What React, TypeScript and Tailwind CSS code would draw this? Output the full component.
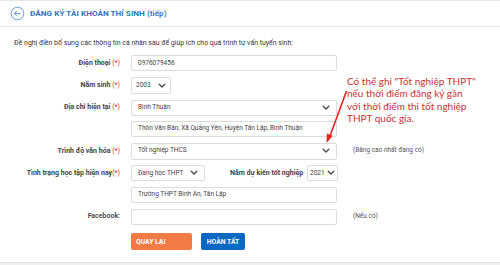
import React from "react";

const Chevron = ({ className = "" }: { className?: string }) => (
  <svg width="8" height="6" viewBox="0 0 8 6" className={className}>
    <path d="M1.2 1.3 L4 4 L6.8 1.3" fill="none" stroke="#444" strokeWidth="1.3" strokeLinecap="round" strokeLinejoin="round" />
  </svg>
);

const Req = () => <span className="text-[#c0392b] font-normal">(*)</span>;

const Label = ({ children }: { children: React.ReactNode }) => (
  <div className="w-[121px] shrink-0 pr-[1px] text-right text-[7px] font-bold text-[#444]">{children}</div>
);

const Box = ({ children, className = "" }: { children?: React.ReactNode; className?: string }) => (
  <div className={`h-[16px] border border-[#dcdcdc] rounded-[2px] bg-white flex items-center px-[6px] text-[6.5px] text-[#444] ${className}`}>
    {children}
  </div>
);

export default function App() {
  return (
    <div className="relative w-[500px] h-[265px] bg-white overflow-hidden" style={{ fontFamily: "Roboto, 'Liberation Sans', Arial, sans-serif" }}>
      {/* header */}
      <div className="h-[27px] border-t border-b border-[#e6e6e6] flex items-center pl-[10px]">
        <svg width="15" height="15" viewBox="0 0 15 15">
          <circle cx="7.5" cy="7.5" r="6.3" fill="none" stroke="#6aa3dc" strokeWidth="1" />
          <path d="M4.5 7.5 H10.2 M6.6 5.4 L4.5 7.5 L6.6 9.6" fill="none" stroke="#6aa3dc" strokeWidth="1" strokeLinecap="round" strokeLinejoin="round" />
        </svg>
        <div className="ml-[5px] text-[8.1px] font-bold text-[#2f73bd] tracking-[0.05px]">
          ĐĂNG KÝ TÀI KHOẢN THÍ SINH <span className="font-semibold">(tiếp)</span>
        </div>
      </div>

      <div className="pl-[14px] pt-[11px] text-[6.95px] text-[#333]">
        Đề nghị điền bổ sung các thông tin cá nhân sau để giúp ích cho quá trình tư vấn tuyển sinh:
      </div>

      <div className="mt-[7px] flex flex-col gap-[5.6px]">
        <div className="flex items-center h-[16px]">
          <Label>Điện thoại <Req /></Label>
          <Box className="ml-[10px] w-[206px]">0976079456</Box>
        </div>
        <div className="flex items-center h-[17px]">
          <Label>Năm sinh <Req /></Label>
          <Box className="ml-[10px] w-[40px] h-[17px] justify-between !px-[4px]">
            <span>2003</span>
            <Chevron />
          </Box>
        </div>
        <div className="flex items-center h-[16px]">
          <Label>Địa chỉ hiện tại <Req /></Label>
          <Box className="ml-[10px] w-[206px] justify-between">
            <span>Bình Thuận</span>
            <Chevron />
          </Box>
        </div>
        <div className="flex items-center h-[16px]">
          <div className="w-[121px] shrink-0" />
          <Box className="ml-[10px] w-[206px]">Thôn Văn Bân, Xã Quảng Yên, Huyện Tân Lập, Bình Thuận</Box>
        </div>
        <div className="flex items-center h-[17px]">
          <Label>Trình độ văn hóa <Req /></Label>
          <Box className="ml-[10px] w-[206px] h-[17px] justify-between">
            <span>Tốt nghiệp THCS</span>
            <Chevron />
          </Box>
          <div className="ml-[16px] text-[6.5px] text-[#555]">(Bằng cao nhất đang có)</div>
        </div>
        <div className="flex items-center h-[16px]">
          <Label>Tình trạng học tập hiện nay<Req /></Label>
          <Box className="ml-[10px] w-[74px] justify-between">
            <span>Đang học THPT</span>
            <Chevron />
          </Box>
          <div className="ml-[25px] w-[77px] text-[7px] font-bold text-[#444]">Năm dự kiến tốt nghiệp</div>
          <Box className="w-[31px] justify-between !px-[2px]">
            <span>2021</span>
            <Chevron />
          </Box>
        </div>
        <div className="flex items-center h-[16px]">
          <div className="w-[121px] shrink-0" />
          <Box className="ml-[10px] w-[206px]">Trường THPT Bình An, Tân Lập</Box>
        </div>
        <div className="flex items-center h-[16px]">
          <Label><span className="font-semibold">Facebook:</span></Label>
          <Box className="ml-[10px] w-[206px]" />
          <div className="ml-[16px] text-[6.5px] text-[#555]">(Nếu có)</div>
        </div>
        <div className="flex items-center h-[17px] mt-[3px]">
          <div className="w-[121px] shrink-0" />
          <button className="ml-[10px] w-[61px] h-[17px] rounded-[2px] bg-[#f27a44] text-white text-[6.8px] font-bold text-left pl-[5px]">QUAY LẠI</button>
          <button className="ml-[9px] w-[44px] h-[17px] rounded-[2px] bg-[#0a68c2] text-white text-[6.8px] font-bold">HOÀN TẤT</button>
        </div>
      </div>

      <div className="absolute left-0 right-0 bottom-0 h-[3px] bg-[#efefef] border-t border-[#e2e2e2]" />

      {/* annotation */}
      <div
        className="absolute left-[347px] top-[75px] text-[10px] leading-[12.3px] text-[#c8312f]"
        style={{ fontFamily: "Lato, 'Open Sans', sans-serif" }}
      >
        <div>Có thể ghi "Tốt nghiệp THPT"</div>
        <div>nếu thời điểm đăng ký gần</div>
        <div>với thời điểm thi tốt nghiệp</div>
        <div>THPT quốc gia.</div>
      </div>
      <svg className="absolute left-0 top-0" width="500" height="265" viewBox="0 0 500 265">
        <line x1="346.5" y1="91" x2="330" y2="136" stroke="#e8231f" strokeWidth="1.6" />
        <path d="M326.5 143 L326.8 133.5 L332.8 135.7 Z" fill="#e8231f" />
      </svg>
    </div>
  );
}
